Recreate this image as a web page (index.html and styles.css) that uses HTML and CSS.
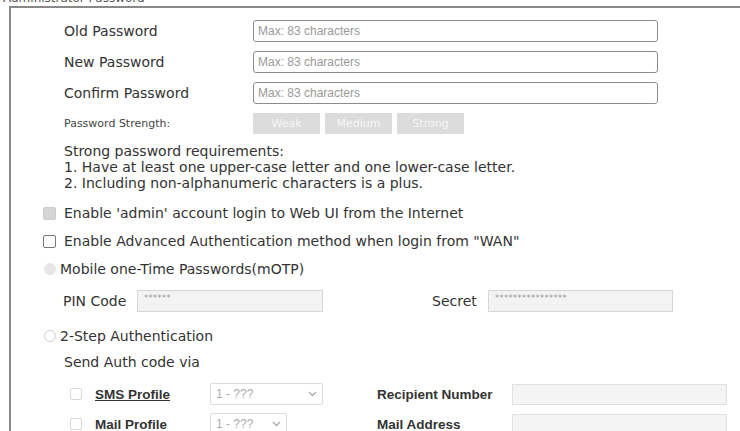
FILE: index.html
```html
<!DOCTYPE html>
<html lang="en">
<head>
    <meta charset="UTF-8">
    <meta name="viewport" content="width=device-width, initial-scale=1.0">
    <title>Administrator Password</title>
    <link rel="stylesheet" href="styles.css">
</head>
<body>
    <div class="title">Administrator Password</div>
    <div class="panel">
        <div class="pw-grid">
            <label class="pw-label">Old Password</label>
            <input type="password" class="pw-input" placeholder="Max: 83 characters">
            <label class="pw-label">New Password</label>
            <input type="password" class="pw-input" placeholder="Max: 83 characters">
            <label class="pw-label">Confirm Password</label>
            <input type="password" class="pw-input" placeholder="Max: 83 characters">
            <label class="pw-label strength-label">Password Strength:</label>
            <div class="strength">
                <span class="level">Weak</span>
                <span class="level">Medium</span>
                <span class="level">Strong</span>
            </div>
        </div>

        <div class="req">
            Strong password requirements:<br>
            1. Have at least one upper-case letter and one lower-case letter.<br>
            2. Including non-alphanumeric characters is a plus.
        </div>

        <div class="check-row first">
            <span class="box box-disabled"></span>
            <span>Enable 'admin' account login to Web UI from the Internet</span>
        </div>
        <div class="check-row">
            <span class="box"></span>
            <span>Enable Advanced Authentication method when login from "WAN"</span>
        </div>
        <div class="check-row">
            <span class="radio radio-on"></span>
            <span>Mobile one-Time Passwords(mOTP)</span>
        </div>

        <div class="pin-row">
            <span class="pin-label">PIN Code</span>
            <span class="field pin-field">******</span>
            <span class="secret-label">Secret</span>
            <span class="field secret-field">****************</span>
        </div>

        <div class="check-row twostep">
            <span class="radio"></span>
            <span>2-Step Authentication</span>
        </div>
        <div class="send">Send Auth code via</div>

        <div class="via-grid">
            <span class="box box-light"></span>
            <a class="via-name">SMS Profile</a>
            <span class="select sms-select">1 - ???
                <svg class="chev" width="9" height="6" viewBox="0 0 9 6"><polyline points="1,1 4.5,4.5 8,1" fill="none" stroke="#aaa" stroke-width="1.3"/></svg>
            </span>
            <span class="via-label">Recipient Number</span>
            <span class="field via-field"></span>

            <span class="box box-light"></span>
            <span class="via-name plain">Mail Profile</span>
            <span class="select mail-select">1 - ???
                <svg class="chev" width="9" height="6" viewBox="0 0 9 6"><polyline points="1,1 4.5,4.5 8,1" fill="none" stroke="#aaa" stroke-width="1.3"/></svg>
            </span>
            <span class="via-label">Mail Address</span>
            <span class="field via-field"></span>
        </div>
    </div>
</body>
</html>
```

FILE: styles.css
```css
body {
    margin: 0;
    font-family: "DejaVu Sans", Verdana, sans-serif;
    font-size: 14px;
    color: #333;
    background: #fff;
    overflow: hidden;
}
.title {
    margin-top: -8px;
    padding-left: 3px;
    font-size: 12px;
    line-height: 12px;
    color: #555;
}
.panel {
    margin-top: 2px;
    margin-left: 9px;
    border-top: 2px solid #888;
    border-left: 2px solid #888;
    padding: 7px 0 0 32px;
}
.pw-grid {
    display: grid;
    grid-template-columns: 189px 405px;
    grid-auto-rows: 31px;
    align-items: center;
    margin-left: 21px;
}
.pw-label {
    color: #333;
}
.strength-label {
    font-size: 11px;
    color: #444;
}
.pw-input {
    box-sizing: border-box;
    height: 22px;
    width: 405px;
    border: 1px solid #8c8c8c;
    border-radius: 3px;
    padding: 0 4px;
    font-family: "Liberation Sans", Arial, sans-serif;
    font-size: 12px;
}
.pw-input::placeholder {
    color: #9a9a9a;
}
.strength {
    display: flex;
    gap: 5px;
}
.level {
    width: 67px;
    height: 21px;
    background: #dcdcdc;
    color: #f6f6f6;
    font-size: 11px;
    display: flex;
    justify-content: center;
    align-items: center;
}
.req {
    margin: 4px 0 0 21px;
    line-height: 16px;
}
.check-row {
    height: 28px;
    display: flex;
    align-items: center;
}
.check-row.first {
    margin-top: 8px;
}
.box {
    box-sizing: border-box;
    width: 13px;
    height: 13px;
    border: 1px solid #777;
    border-radius: 2px;
    margin-right: 8px;
    background: #fff;
}
.box-disabled {
    background: #d6d6d6;
    border-color: #cccccc;
}
.box-light {
    width: 12px;
    height: 12px;
    border-color: #d8d8d8;
    margin: 0;
}
.radio {
    box-sizing: border-box;
    width: 12px;
    height: 12px;
    border: 1px solid #d0d0d0;
    border-radius: 50%;
    margin: 0 4px 0 1px;
    background: #fff;
}
.radio-on {
    background: #e6e6e6;
    border-color: #e6e6e6;
}
.pin-row {
    margin: 2px 0 0 20px;
    height: 32px;
    display: flex;
    align-items: center;
}
.pin-label {
    width: 74px;
}
.field {
    box-sizing: border-box;
    height: 22px;
    background: #f3f3f3;
    border: 1px solid #d6d6d6;
    color: #999;
    font-size: 8px;
    padding: 3px 6px;
    letter-spacing: 0.5px;
}
.pin-field {
    width: 186px;
}
.secret-label {
    margin-left: 109px;
    width: 56px;
}
.secret-field {
    width: 185px;
}
.twostep {
    margin-top: 5px;
}
.send {
    margin-left: 21px;
    height: 24px;
    line-height: 24px;
}
.via-grid {
    margin: 5px 0 0 27px;
    display: grid;
    grid-template-columns: 25px 115px 167px 135px 215px;
    grid-auto-rows: 30px;
    align-items: center;
}
.via-name {
    font-family: "Liberation Sans", Arial, sans-serif;
    font-weight: bold;
    font-size: 13.5px;
    color: #333;
    text-decoration: underline;
}
.via-name.plain {
    text-decoration: none;
}
.select {
    box-sizing: border-box;
    height: 22px;
    border: 1px solid #dcdcdc;
    border-radius: 2px;
    font-family: "Liberation Sans", Arial, sans-serif;
    font-size: 12px;
    color: #aaa;
    padding: 0 5px;
    display: flex;
    align-items: center;
    justify-content: space-between;
}
.sms-select {
    width: 113px;
}
.mail-select {
    width: 77px;
}
.via-label {
    font-family: "Liberation Sans", Arial, sans-serif;
    font-weight: bold;
    font-size: 13.5px;
    color: #333;
}
.via-field {
    width: 215px;
    height: 21px;
    background: #f4f4f4;
    border-color: #e0e0e0;
}
```
